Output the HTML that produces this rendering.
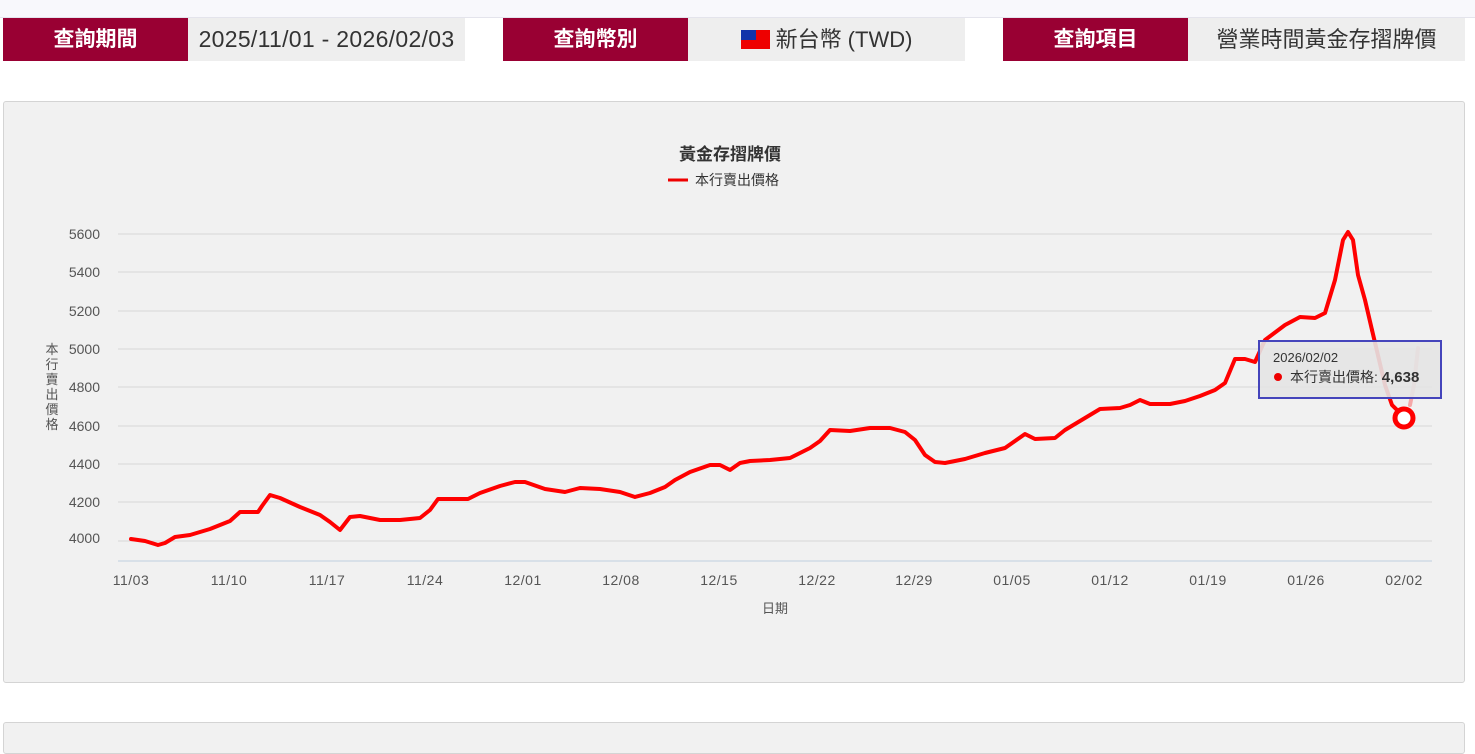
<!DOCTYPE html>
<html><head><meta charset="utf-8"><style>
body{margin:0;width:1475px;height:734px;background:#fff;overflow:hidden;font-family:"Liberation Sans","Noto Sans CJK TC",sans-serif;position:relative}
.top{position:absolute;left:0;top:0;width:1475px;height:17px;background:#f8f8fc;border-bottom:1px solid #e4e4ec}
.lab{position:absolute;top:18px;height:43px;background:#990033;color:#fff;font-weight:bold;font-size:21px;line-height:43px;text-align:center;width:185px}
.val{position:absolute;top:18px;height:43px;background:#eee;color:#333;font-size:22px;line-height:43px;text-align:center;width:277px}
.panel{position:absolute;left:3px;top:101px;width:1460px;height:580px;background:#f1f1f1;border:1px solid #d4d4d4;border-radius:3px}
.panel2{position:absolute;left:3px;top:722px;width:1460px;height:30px;background:#f1f1f1;border:1px solid #d4d4d4;border-radius:3px}
</style></head><body>
<div class="top"></div>
<div class="lab" style="left:3px">查詢期間</div><div class="val" style="left:188px;font-size:23px;letter-spacing:0.3px">2025/11/01 - 2026/02/03</div>
<div class="lab" style="left:503px">查詢幣別</div><div class="val" style="left:688px"><span style="display:inline-block;width:29px;height:19px;background:#e00;vertical-align:-2px;position:relative;margin-right:6px"><span style="position:absolute;left:0;top:0;width:15px;height:10px;background:#1133aa"></span></span>新台幣 (TWD)</div>
<div class="lab" style="left:1003px">查詢項目</div><div class="val" style="left:1188px">營業時間黃金存摺牌價</div>
<div class="panel"></div><div class="panel2"></div>
<svg style="position:absolute;left:0;top:0" width="1475" height="734" font-family="Liberation Sans,Noto Sans CJK TC,sans-serif">
<text x="730" y="160" font-size="17" font-weight="bold" fill="#333" text-anchor="middle">黃金存摺牌價</text>
<line x1="668" y1="180" x2="688" y2="180" stroke="#e00" stroke-width="3"/>
<text x="695" y="185" font-size="14" fill="#333">本行賣出價格</text>
<g stroke="#d8d8d8" stroke-width="1">
<line x1="118" y1="234" x2="1432" y2="234"/><line x1="118" y1="272" x2="1432" y2="272"/><line x1="118" y1="311" x2="1432" y2="311"/><line x1="118" y1="349" x2="1432" y2="349"/><line x1="118" y1="387" x2="1432" y2="387"/><line x1="118" y1="426" x2="1432" y2="426"/><line x1="118" y1="464" x2="1432" y2="464"/><line x1="118" y1="502" x2="1432" y2="502"/><line x1="118" y1="541" x2="1432" y2="541"/>
</g>
<line x1="118" y1="561" x2="1432" y2="561" stroke="#c0cfe0"/>
<g font-size="14" fill="#555" text-anchor="end">
<text x="100" y="239">5600</text><text x="100" y="277">5400</text><text x="100" y="316">5200</text><text x="100" y="354">5000</text><text x="100" y="392">4800</text><text x="100" y="431">4600</text><text x="100" y="469">4400</text><text x="100" y="507">4200</text><text x="100" y="543">4000</text>
</g>
<g font-size="13" fill="#555" text-anchor="middle">
<text x="52" y="354">本</text><text x="52" y="369">行</text><text x="52" y="384">賣</text><text x="52" y="399">出</text><text x="52" y="414">價</text><text x="52" y="429">格</text>
</g>
<g font-size="14" fill="#555" text-anchor="middle" letter-spacing="0.5">
<text x="131" y="585">11/03</text><text x="229" y="585">11/10</text><text x="327" y="585">11/17</text><text x="425" y="585">11/24</text><text x="523" y="585">12/01</text><text x="621" y="585">12/08</text><text x="719" y="585">12/15</text><text x="817" y="585">12/22</text><text x="914" y="585">12/29</text><text x="1012" y="585">01/05</text><text x="1110" y="585">01/12</text><text x="1208" y="585">01/19</text><text x="1306" y="585">01/26</text><text x="1404" y="585">02/02</text>
</g>
<text x="775" y="613" font-size="13" fill="#555" text-anchor="middle">日期</text>
<polyline fill="none" stroke="#f00" stroke-width="4" stroke-linejoin="round" stroke-linecap="round" points="131,539 145,541 158,545 165,543 175,537 190,535 210,529 230,521 240,512 258,512 262,506 270,495 280,498 300,507 320,515 330,522 340,530 350,517 360,516 380,520 400,520 420,518 430,510 438,499 450,499 468,499 480,493 500,486 515,482 525,482 545,489 565,492 580,488 600,489 620,492 635,497 650,493 665,487 675,480 690,472 710,465 720,465 730,470 740,463 750,461 770,460 790,458 810,448 820,441 830,430 850,431 870,428 890,428 905,432 915,440 925,455 935,462 945,463 965,459 985,453 1005,448 1015,441 1025,434 1035,439 1055,438 1065,430 1085,418 1100,409 1120,408 1130,405 1140,400 1150,404 1170,404 1185,401 1200,396 1215,390 1225,383 1235,359 1245,359 1255,362 1265,340 1285,325 1300,317 1315,318 1325,313 1335,280 1343,240 1348,232 1353,240 1358,275 1365,300 1372,330"/>
<polyline fill="none" stroke="#f00" stroke-width="4" stroke-linejoin="round" stroke-linecap="round" points="1372,330 1385,385 1392,405 1397,410"/>
<polyline fill="none" stroke="#f00" stroke-opacity="0.3" stroke-width="4" stroke-linecap="round" points="1410,405 1414,385 1418,348"/>
<rect x="1259" y="341" width="182" height="57" fill="#e4e4e4" fill-opacity="0.9" stroke="#4444bb" stroke-width="2"/>
<text x="1273" y="362" font-size="13" fill="#333">2026/02/02</text>
<circle cx="1278" cy="377" r="4" fill="#e00"/>
<text x="1290" y="382" font-size="14" fill="#333">本行賣出價格: <tspan font-weight="bold" font-size="15">4,638</tspan></text>
<circle cx="1404" cy="418" r="9" fill="#fff" stroke="#f00" stroke-width="5"/>
</svg>
</body></html>
